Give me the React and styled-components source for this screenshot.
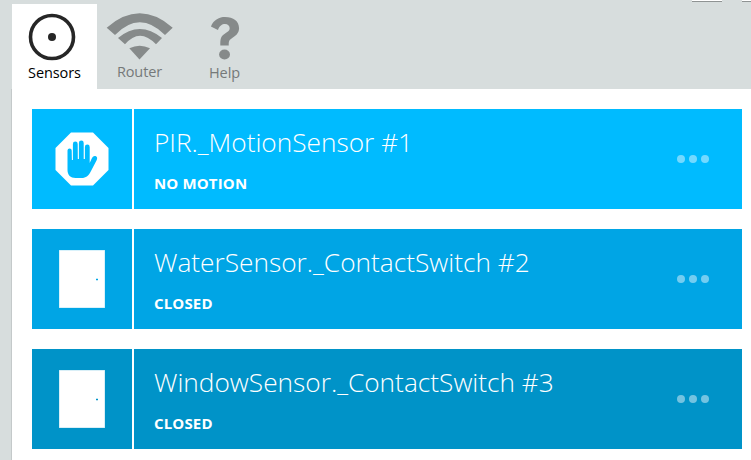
import React from "react";
import styled, { createGlobalStyle } from "styled-components";

const Global = createGlobalStyle`
  html, body { margin: 0; padding: 0; background: #fff; }
  body { font-family: "Open Sans", "Noto Sans", sans-serif; overflow: hidden; }
`;
const Page = styled.div`
  width: 751px; height: 460px; display: flex; flex-direction: column; overflow: hidden; position: relative;
`;
const TopBar = styled.div`
  height: 89px; flex: none; background: #d7dddd; display: flex; align-items: flex-end; padding-left: 12px; box-sizing: border-box;
`;
const WinEdge = styled.span`
  position: absolute; top: 0; left: ${p => p.$left}px; width: ${p => p.$w}px; height: 1px; background: #fff; border-bottom: 1px solid #8f9393;
`;
const Tab = styled.div`
  width: 85px; height: 85px; flex: none; display: flex; flex-direction: column; align-items: center;
  background: ${p => p.$active ? "#fff" : "transparent"};
  color: ${p => p.$active ? "#000" : "#757979"};
  box-sizing: border-box;
`;
const TabIcon = styled.div`
  height: 60px; flex: none; display: flex; align-items: flex-start; justify-content: center;
  svg { display: block; }
`;
const SensorGlyph = styled.svg`
  margin: 9px 5px 0 0;
`;
const RouterGlyph = styled.svg`
  margin-top: 9px;
`;
const HelpGlyph = styled.svg`
  margin-top: 13px;
`;
const TabLabel = styled.span`
  font-size: 14.5px; line-height: 18px; font-weight: 400; letter-spacing: -0.1px;
  transform: translateY(${p => p.$dy}px);
`;
const Main = styled.div`
  flex: 1; display: flex; min-height: 0;
`;
const Rail = styled.div`
  width: 12px; flex: none; background: #d7dddd; border-right: 1px solid #c4c9ca; box-sizing: border-box;
`;
const List = styled.div`
  flex: 1; padding: 20px 9px 0 20px; display: flex; flex-direction: column; gap: 20px;
`;
const Card = styled.div`
  height: 100px; display: flex; gap: 2px; flex: none;
`;
const IconCell = styled.div`
  width: 100px; flex: none; background: ${p => p.$bg}; display: flex; align-items: center; justify-content: center;
`;
const Body = styled.div`
  flex: 1; background: ${p => p.$bg}; color: #fff; padding: 0 0 0 20px; position: relative; display: flex; flex-direction: column;
`;
const Title = styled.div`
  font-size: 26.25px; font-weight: 300; line-height: 32px; margin-top: 17px; letter-spacing: 0; white-space: nowrap;
`;
const Status = styled.div`
  font-size: 15px; font-weight: 700; line-height: 20px; margin-top: 15px; letter-spacing: 0.15px; text-transform: uppercase;
`;
const Dots = styled.div`
  position: absolute; right: 33px; top: 46px; display: flex; gap: 4px;
`;
const Dot = styled.span`
  width: 8px; height: 8px; border-radius: 50%; background: rgba(255,255,255,0.45);
`;

const SensorIcon = () => (
  <SensorGlyph width="48" height="48" viewBox="0 0 48 48">
    <circle cx="24" cy="24" r="21.500" fill="none" stroke="#262626" strokeWidth="3.600" />
    <circle cx="24" cy="24" r="4" fill="#262626" />
  </SensorGlyph>
);
const RouterIcon = () => (
  <RouterGlyph width="68" height="47" viewBox="0 0 68 47">
    <path d="M0.700 14.700 Q33.700 -14 66.700 14.700 L59 22 Q33.700 -3.400 9 22 Z" fill="#868a8a" />
    <path d="M12 25 Q33.700 7 56 25 L50 31.300 Q33.700 14 19 31.300 Z" fill="#868a8a" />
    <path d="M23.300 35.300 Q33.700 30 44 35.300 L33.500 46.500 Z" fill="#868a8a" />
  </RouterGlyph>
);
const HelpIcon = () => (
  <HelpGlyph width="30" height="43" viewBox="0 0 32 50" preserveAspectRatio="none">
    <path d="M1 11 C4 3 10 0 16 0 C25 0 31 5 31 13 C31 19 27 22 23 25 C20 27 20 29 20 33 L11 33 C11 27 11 23 15 20 C19 17 21 16 21 13 C21 10 19 8 16 8 C13 8 10 10 8.500 15 Z" fill="#868a8a" />
    <circle cx="15.500" cy="43.500" r="5.800" fill="#868a8a" />
  </HelpGlyph>
);
const StopIcon = ({ bg }) => (
  <svg width="54" height="54" viewBox="0 0 54 54">
    <polygon points="16,0.500 38,0.500 53.500,16 53.500,38 38,53.500 16,53.500 0.500,38 0.500,16" fill="#fff" />
    <path
      d="M12.500 18.500 a2.100 2.100 0 0 1 4.200 0 L16.900 28 H17.900 L17.900 12 a2.400 2.400 0 0 1 4.800 0 L22.800 27 H23.900 V11 a2.400 2.400 0 0 1 4.800 0 V27 H29.900 V15 a2.400 2.400 0 0 1 4.800 0 V31 L36.500 27 C37.500 24.500 39 23.500 40.500 24 C42.500 24.800 42.500 26.500 41.500 28.500 L36 39 C34 43.500 31 46 26.500 46 H20.500 C15.500 46 12.500 43 12.500 38 Z"
      fill={bg}
    />
  </svg>
);
const DoorIcon = ({ bg }) => (
  <svg width="46" height="58" viewBox="0 0 46 58">
    <rect x="0.500" y="0.500" width="45" height="57" fill="#fff" stroke="#fff" strokeOpacity="0.7" />
    <path d="M37 29.500 h2 M38 28.500 v2" stroke={bg} strokeWidth="1" />
  </svg>
);

const cards = [
  { bg: "#00bbff", icon: StopIcon, title: "PIR._MotionSensor #1", status: "No motion" },
  { bg: "#00a5e5", icon: DoorIcon, title: "WaterSensor._ContactSwitch #2", status: "Closed" },
  { bg: "#0093c8", icon: DoorIcon, title: "WindowSensor._ContactSwitch #3", status: "Closed" },
];

export default function App() {
  return (
    <Page>
      <Global />
      <WinEdge $left={692} $w={30} />
      <WinEdge $left={742} $w={9} />
      <TopBar>
        <Tab $active>
          <TabIcon><SensorIcon /></TabIcon>
          <TabLabel $dy={0}>Sensors</TabLabel>
        </Tab>
        <Tab>
          <TabIcon><RouterIcon /></TabIcon>
          <TabLabel $dy={-1}>Router</TabLabel>
        </Tab>
        <Tab>
          <TabIcon><HelpIcon /></TabIcon>
          <TabLabel $dy={0}>Help</TabLabel>
        </Tab>
      </TopBar>
      <Main>
        <Rail />
        <List>
          {cards.map(c => {
            const Icon = c.icon;
            return (
              <Card key={c.title}>
                <IconCell $bg={c.bg}><Icon bg={c.bg} /></IconCell>
                <Body $bg={c.bg}>
                  <Title>{c.title}</Title>
                  <Status>{c.status}</Status>
                  <Dots><Dot /><Dot /><Dot /></Dots>
                </Body>
              </Card>
            );
          })}
        </List>
      </Main>
    </Page>
  );
}
